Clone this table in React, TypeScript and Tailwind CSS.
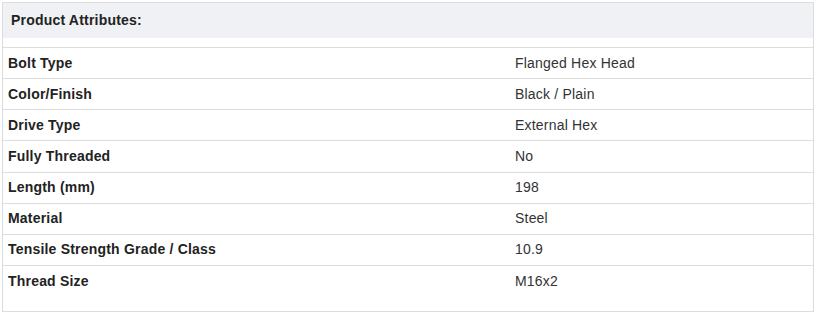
import React from 'react';

const attributes: [string, string][] = [
  ['Bolt Type', 'Flanged Hex Head'],
  ['Color/Finish', 'Black / Plain'],
  ['Drive Type', 'External Hex'],
  ['Fully Threaded', 'No'],
  ['Length (mm)', '198'],
  ['Material', 'Steel'],
  ['Tensile Strength Grade / Class', '10.9'],
  ['Thread Size', 'M16x2'],
];

const App: React.FC = () => {
  return (
    <div className="w-[816px] h-[315px] bg-white p-[2px] font-['Liberation_Sans',Arial,sans-serif] text-[14px] tracking-[0.2px]">
      <div className="border border-[#dcdcdc] pb-[15px]">
        <div className="h-[35px] bg-[#eff1f5] flex items-center px-[8px] font-bold text-[#222]">
          Product Attributes:
        </div>
        <div className="mt-[9px]">
          {attributes.map(([label, value]) => (
            <div key={label} className="grid grid-cols-[505px_1fr] h-[31.15px] items-center border-t border-[#dcdcdc]">
              <div className="pl-[5px] font-bold text-[#222]">{label}</div>
              <div className="pl-[7px] text-[#333]">{value}</div>
            </div>
          ))}
        </div>
      </div>
    </div>
  );
};

export default App;
